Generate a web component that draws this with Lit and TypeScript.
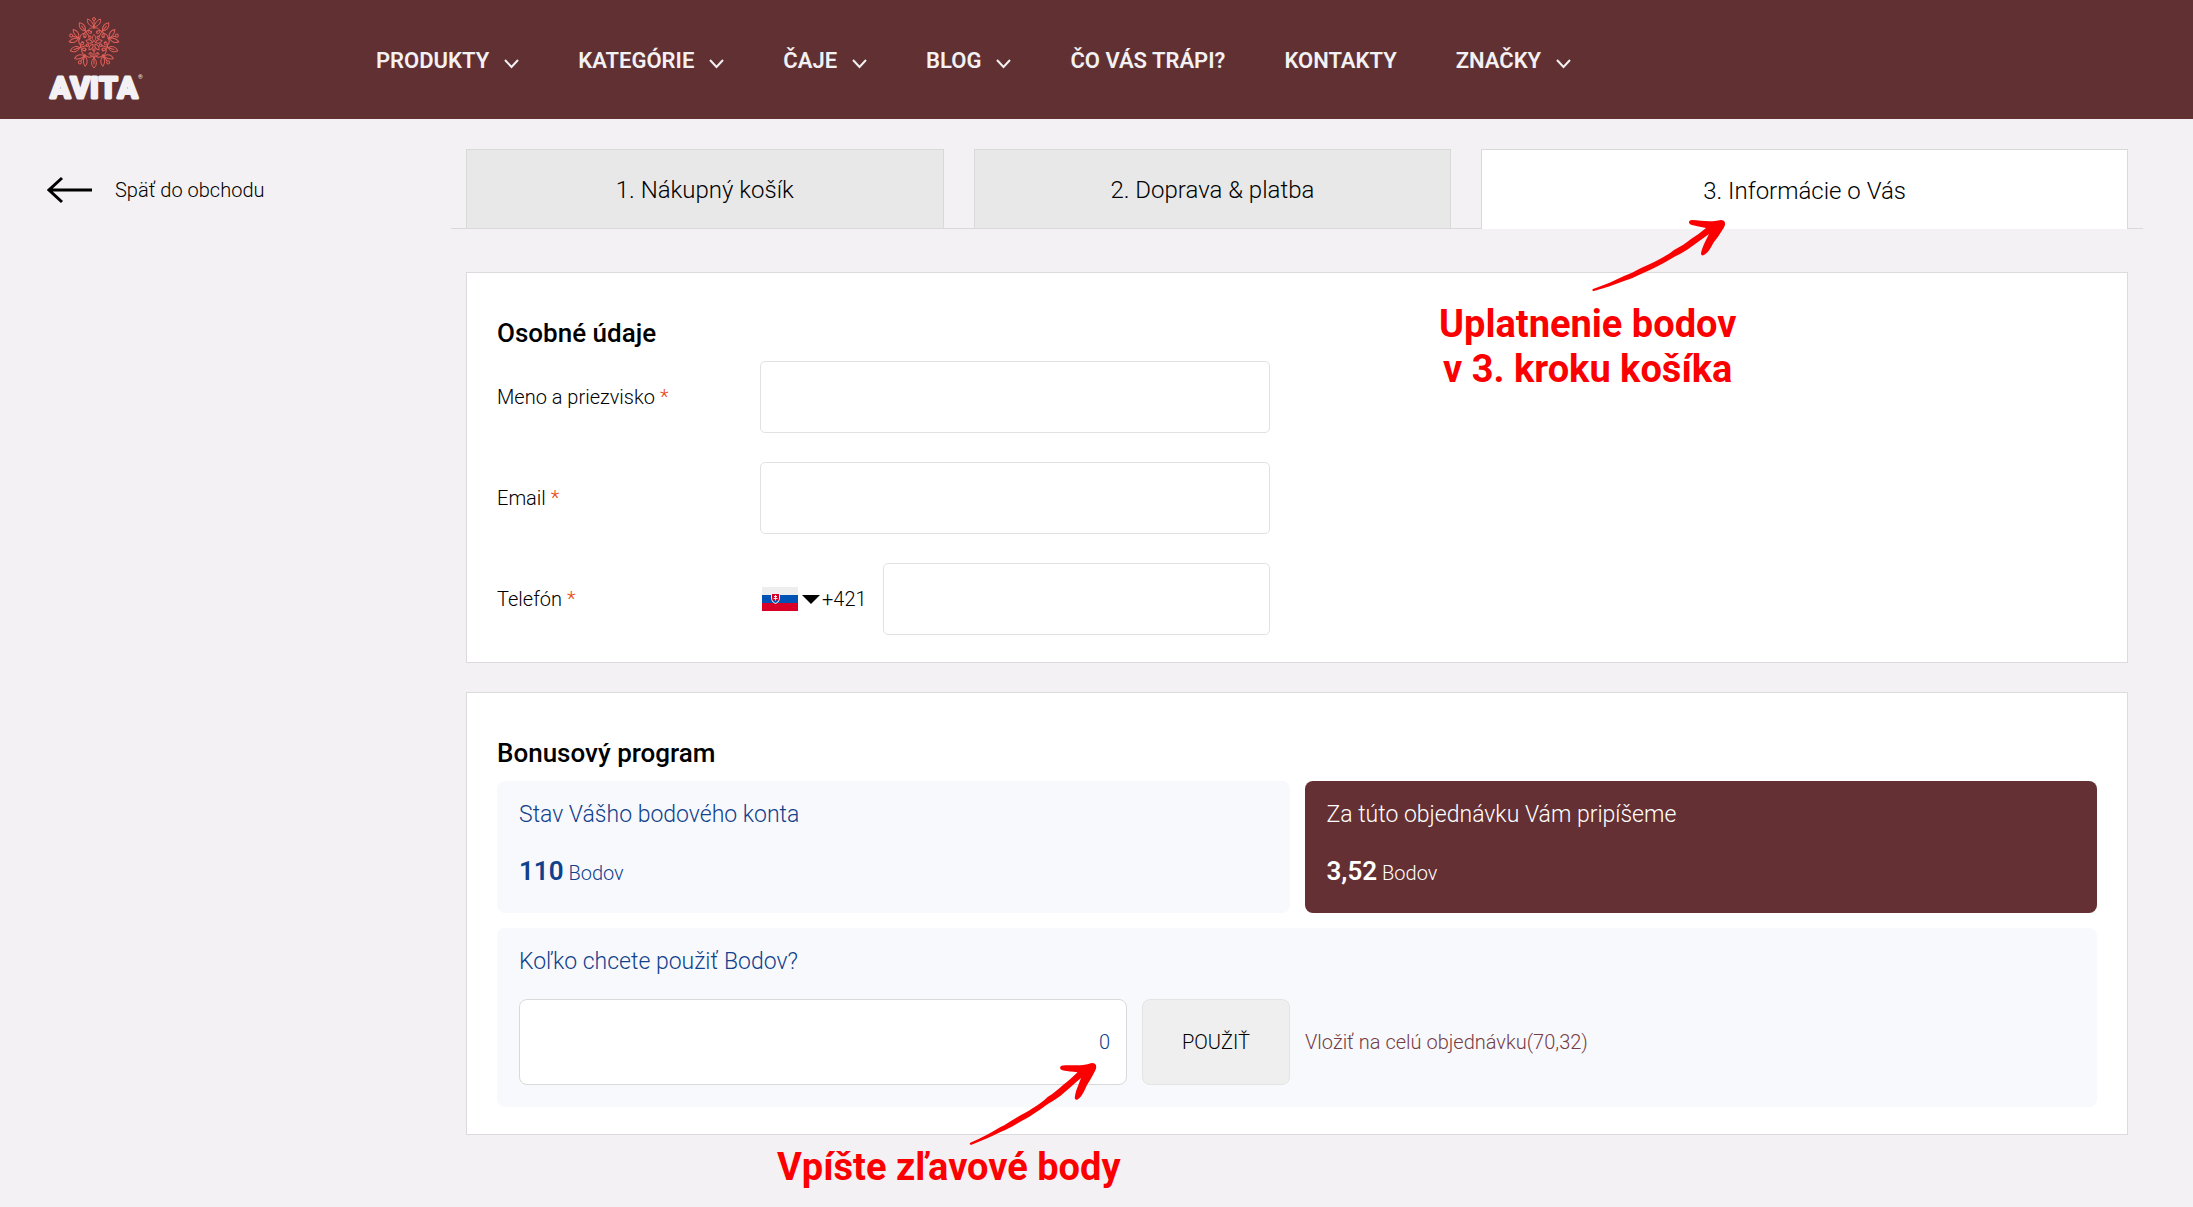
import { LitElement, html, svg, css, nothing } from "lit";
import { customElement, property } from "lit/decorators.js";

interface NavItem {
  label: string;
  menu: boolean;
}

const NAV: NavItem[] = [
  { label: "PRODUKTY", menu: true },
  { label: "KATEGÓRIE", menu: true },
  { label: "ČAJE", menu: true },
  { label: "BLOG", menu: true },
  { label: "ČO VÁS TRÁPI?", menu: false },
  { label: "KONTAKTY", menu: false },
  { label: "ZNAČKY", menu: true },
];

const FIFTHS = [0, 72, 144, 216, 288];

@customElement("avita-logo")
export class AvitaLogo extends LitElement {
  static styles = css`
    :host {
      display: block;
    }
    .logo {
      display: block;
    }
    .art {
      display: block;
      width: 98px;
      height: 88px;
      overflow: visible;
    }
    .flower {
      fill: none;
      stroke: #e0605a;
      stroke-width: 1;
      stroke-linecap: round;
      stroke-linejoin: round;
    }
    .word {
      font: 700 30px Roboto, sans-serif;
      font-kerning: none;
      fill: #f3f1f3;
      stroke: #f3f1f3;
      stroke-width: 3;
      stroke-linejoin: round;
      text-anchor: middle;
    }
    .mark {
      font: 400 6px Roboto, sans-serif;
      fill: #f3f1f3;
    }
  `;

  render() {
    return html`
      <a class="logo" href="#" aria-label="AVITA">
        <svg class="art" viewBox="0 0 98 88" aria-hidden="true">
          <g class="flower" transform="translate(48 27)">
            ${FIFTHS.map(
              (a) => svg`
              <g transform="rotate(${a})">
                <circle cx="0" cy="-24" r="1.5" />
                <path d="M0 -22V-15" />
                <path d="M0 -16C-5 -17 -7 -20 -6.500 -24C-3 -23 -1 -20 0 -16Z" />
                <path d="M0 -16C5 -17 7 -20 6.500 -24C3 -23 1 -20 0 -16Z" />
                <path d="M0 -15C-4 -16 -7 -13 -5.500 -10.500C-4 -8.500 -1.500 -10 -2.500 -12" />
                <path d="M0 -15C4 -16 7 -13 5.500 -10.500C4 -8.500 1.500 -10 2.500 -12" />
                <path d="M0 -1.500C-2.500 -4 -2 -6.500 0 -8.500C2 -6.500 2.500 -4 0 -1.500Z" />
              </g>
              <g transform="rotate(${a + 36})">
                <path d="M0 -15C-3.500 -18 -3 -22 0 -25C3 -22 3.500 -18 0 -15Z" />
                <path d="M0 -21V-8" />
                <path d="M0 -14C-4 -14 -5 -11 -3.500 -9.500M0 -14C4 -14 5 -11 3.500 -9.500" />
                <circle cx="0" cy="-7" r="1.200" />
              </g>
            `
            )}
          </g>
          <text class="word" x="48" y="82">AVITA</text>
          <text class="mark" x="92" y="63">®</text>
        </svg>
      </a>
    `;
  }
}

@customElement("pointer-note")
export class PointerNote extends LitElement {
  @property({ attribute: false }) lines: string[] = [];
  @property({ type: Number }) turn = 0;

  static styles = css`
    :host {
      display: flex;
      flex-direction: column;
      align-items: flex-end;
      color: #fb0000;
      pointer-events: none;
    }
    .arrow {
      width: 140px;
      height: 84px;
      margin: 0 var(--note-inset, 0) var(--note-gap, 0) 0;
      overflow: visible;
      fill: #fb0000;
    }
    .text {
      margin: 0;
      font: 700 38px/45px Roboto, sans-serif;
      text-align: center;
      white-space: nowrap;
    }
  `;

  render() {
    return html`
      <svg class="arrow" viewBox="0 0 140 84" aria-hidden="true">
        <path
          transform="rotate(${this.turn} 70 42)"
          d="M2 77C13 73 23 69 33 64C39 62 44 59 50 56C56 53 62 51 67 48C73 45 78 42 83 38C89 35 95 31 100 27C105 24 110 20 115 16C110 15 105 14 101 13C97 12 97 8 101 8C108 8 115 10 124 9C127 9 130 7 133 9C135 11 134 14 132 17C129 22 126 26 123 30C120 35 118 40 113 43C111 44 110 43 110 41C111 36 113 32 115 28C116 26 117 24 118 22C112 26 106 31 100 35C95 39 89 42 83 45C78 48 73 51 67 54C62 57 56 59 50 62C44 65 39 67 33 69C23 73 13 76 3 79C1 79 1 78 2 77Z"
        />
      </svg>
      <p class="text">
        ${this.lines.map((line, i) => html`${i ? html`<br />` : nothing}${line}`)}
      </p>
    `;
  }
}

@customElement("app-root")
export class AppRoot extends LitElement {
  static styles = css`
    :host {
      display: block;
      min-height: 100vh;
      background: #f3f1f3;
      color: #000;
      font: 300 20px/30px Roboto, sans-serif;
    }
    *,
    *::before,
    *::after {
      box-sizing: border-box;
    }
    input,
    button,
    select {
      font: inherit;
      color: inherit;
    }
    .header {
      display: flex;
      align-items: center;
      height: 119px;
      padding: 0 46px;
      background: #613032;
    }
    .brand {
      flex: none;
      width: 98px;
      margin-right: 232px;
    }
    .nav {
      display: flex;
      gap: 59px;
    }
    .nav-link {
      display: flex;
      align-items: center;
      gap: 15px;
      padding-top: 2px;
      color: #f3f1f3;
      font-size: 22px;
      font-weight: 600;
      text-decoration: none;
      white-space: nowrap;
    }
    .chevron {
      width: 15px;
      height: 10px;
      margin-top: 6px;
      fill: none;
      stroke: currentColor;
      stroke-width: 2;
    }
    .page {
      display: grid;
      grid-template-columns: 404px minmax(0, 1fr);
      padding: 30px 50px 72px 47px;
    }
    .back {
      display: flex;
      align-items: center;
      gap: 22px;
      height: 82px;
      align-self: start;
      color: #000;
      text-decoration: none;
    }
    .back-arrow {
      width: 46px;
      height: 28px;
      fill: none;
      stroke: #000;
      stroke-width: 3;
    }
    .steps {
      display: grid;
      grid-template-columns: 3fr 3fr 4fr;
      margin: 0;
      padding: 0;
      list-style: none;
      border-bottom: 1px solid #d9d9d9;
    }
    .step {
      padding: 0 15px;
    }
    .step-link {
      display: flex;
      align-items: center;
      justify-content: center;
      height: 79px;
      padding-top: 2px;
      border: 1px solid #d9d9d9;
      border-bottom: 0;
      background: #e8e8e8;
      color: #000;
      font-size: 24px;
      text-decoration: none;
    }
    .step-link.active {
      height: 80px;
      margin-bottom: -1px;
      background: #fff;
    }
    .cards {
      display: flex;
      flex-direction: column;
      gap: 29px;
      padding: 43px 15px 0;
    }
    .card {
      padding: 42px 30px 27px;
      border: 1px solid #dcdadc;
      background: #fff;
    }
    .title {
      margin: 0 0 10px;
      font-size: 26px;
      font-weight: 500;
      line-height: 36px;
    }
    .fields {
      display: flex;
      flex-direction: column;
      gap: 29px;
      max-width: 773px;
    }
    .field {
      display: grid;
      grid-template-columns: 263px minmax(0, 1fr);
      align-items: center;
    }
    .required {
      color: #e8440f;
    }
    .box {
      width: 100%;
      min-width: 0;
      height: 72px;
      padding: 0 16px;
      border: 1px solid #e2e2e2;
      border-radius: 5px;
      background: #fff;
      outline: 0;
    }
    .phone {
      display: flex;
      align-items: center;
    }
    .prefix {
      flex: none;
      display: flex;
      align-items: center;
      gap: 4px;
      width: 123px;
      padding: 0 0 0 2px;
      border: 0;
      background: none;
    }
    .flag {
      width: 36px;
      height: 24px;
    }
    .caret {
      width: 18px;
      height: 9px;
    }
    .code {
      margin-left: -2px;
    }
    .bonus {
      display: grid;
      grid-template-columns: 1fr 1fr;
      gap: 15px;
    }
    .tile {
      padding: 19px 22px 22px;
      border-radius: 8px;
      background: #f8f9fd;
      color: #10418c;
    }
    .tile.dark {
      background: #653033;
      color: #fff;
    }
    .tile.wide {
      grid-column: 1 / -1;
    }
    .caption {
      display: block;
      margin: 0;
      font-size: 23px;
    }
    .points {
      margin: 24px 0 0;
      line-height: 35px;
    }
    .amount {
      font-size: 26px;
      font-weight: 600;
    }
    .apply {
      display: grid;
      grid-template-columns: 608px 148px 1fr;
      align-items: center;
      gap: 15px;
      margin-top: 22px;
    }
    .spend {
      height: 86px;
      border-color: #d9d9d9;
      border-radius: 8px;
      text-align: right;
      color: #10418c;
    }
    .use {
      height: 86px;
      border: 1px solid #e4e4e4;
      border-radius: 8px;
      background: #efefef;
      color: #000;
    }
    .all {
      color: #753c44;
      text-decoration: none;
    }
    .content {
      position: relative;
    }
    .note {
      position: absolute;
    }
    .note-step {
      left: 988px;
      top: 63px;
      --note-inset: 5px;
      --note-gap: 6px;
    }
    .note-points {
      left: 326px;
      top: 911px;
      --note-inset: 16px;
      --note-gap: 1px;
    }
  `;

  private label(id: string, text: string) {
    return html`<label for=${id}>${text} <span class="required">*</span></label>`;
  }

  render() {
    return html`
      <header class="header">
        <avita-logo class="brand"></avita-logo>
        <nav class="nav">
          ${NAV.map(
            (item) => html`<a class="nav-link" href="#">
              <span>${item.label}</span>
              ${item.menu
                ? html`<svg class="chevron" viewBox="0 0 15 10" aria-hidden="true">
                    <path d="M1 1L7.500 8L14 1" />
                  </svg>`
                : nothing}
            </a>`
          )}
        </nav>
      </header>

      <div class="page">
        <a class="back" href="#">
          <svg class="back-arrow" viewBox="0 0 46 28" aria-hidden="true">
            <path d="M45 14H2M15 2L2 14L15 26" />
          </svg>
          <span>Späť do obchodu</span>
        </a>

        <main class="content">
          <ol class="steps">
            <li class="step"><a class="step-link" href="#">1. Nákupný košík</a></li>
            <li class="step"><a class="step-link" href="#">2. Doprava &amp; platba</a></li>
            <li class="step">
              <a class="step-link active" href="#" aria-current="step">3. Informácie o Vás</a>
            </li>
          </ol>

          <form class="cards">
            <section class="card">
              <h2 class="title">Osobné údaje</h2>
              <div class="fields">
                <div class="field">
                  ${this.label("name", "Meno a priezvisko")}
                  <input class="box" id="name" type="text" />
                </div>
                <div class="field">
                  ${this.label("email", "Email")}
                  <input class="box" id="email" type="email" />
                </div>
                <div class="field">
                  ${this.label("phone", "Telefón")}
                  <div class="phone">
                    <button class="prefix" type="button">
                      <svg class="flag" viewBox="0 0 36 24" aria-hidden="true">
                        <path fill="#eeeeee" d="M0 0H36V8H0Z" />
                        <path fill="#0052b4" d="M0 8H36V16H0Z" />
                        <path fill="#d80027" d="M0 16H36V24H0Z" />
                        <path
                          fill="#f0f0f0"
                          d="M9 6H18V11C18 14 16 16 13.500 17C11 16 9 14 9 11Z"
                        />
                        <path
                          fill="#d80027"
                          d="M10 7H17V11C17 12.500 16.500 13.500 16 14H11C10.500 13.500 10 12.500 10 11Z"
                        />
                        <path fill="#0052b4" d="M11 14Q13.500 12 16 14Q15 15.500 13.500 16Q12 15.500 11 14Z" />
                        <path
                          fill="#f0f0f0"
                          d="M13 8H14V9H15V10H14V11H15.500V12H14V13.500H13V12H11.500V11H13V10H12V9H13Z"
                        />
                      </svg>
                      <svg class="caret" viewBox="0 0 18 9" aria-hidden="true">
                        <path d="M0 0H18L9 9Z" />
                      </svg>
                      <span class="code">+421</span>
                    </button>
                    <input class="box" id="phone" type="tel" />
                  </div>
                </div>
              </div>
            </section>

            <section class="card">
              <h2 class="title">Bonusový program</h2>
              <div class="bonus">
                <div class="tile">
                  <p class="caption">Stav Vášho bodového konta</p>
                  <p class="points"><strong class="amount">110</strong> Bodov</p>
                </div>
                <div class="tile dark">
                  <p class="caption">Za túto objednávku Vám pripíšeme</p>
                  <p class="points"><strong class="amount">3,52</strong> Bodov</p>
                </div>
                <div class="tile wide">
                  <label class="caption" for="spend">Koľko chcete použiť Bodov?</label>
                  <div class="apply">
                    <input class="box spend" id="spend" type="text" inputmode="decimal" value="0" />
                    <button class="use" type="button">POUŽIŤ</button>
                    <a class="all" href="#">Vložiť na celú objednávku(70,32)</a>
                  </div>
                </div>
              </div>
            </section>
          </form>

          <pointer-note
            class="note note-step"
            .lines=${["Uplatnenie bodov", "v 3. kroku košíka"]}
          ></pointer-note>
          <pointer-note
            class="note note-points"
            turn="-5"
            .lines=${["Vpíšte zľavové body"]}
          ></pointer-note>
        </main>
      </div>
    `;
  }
}
